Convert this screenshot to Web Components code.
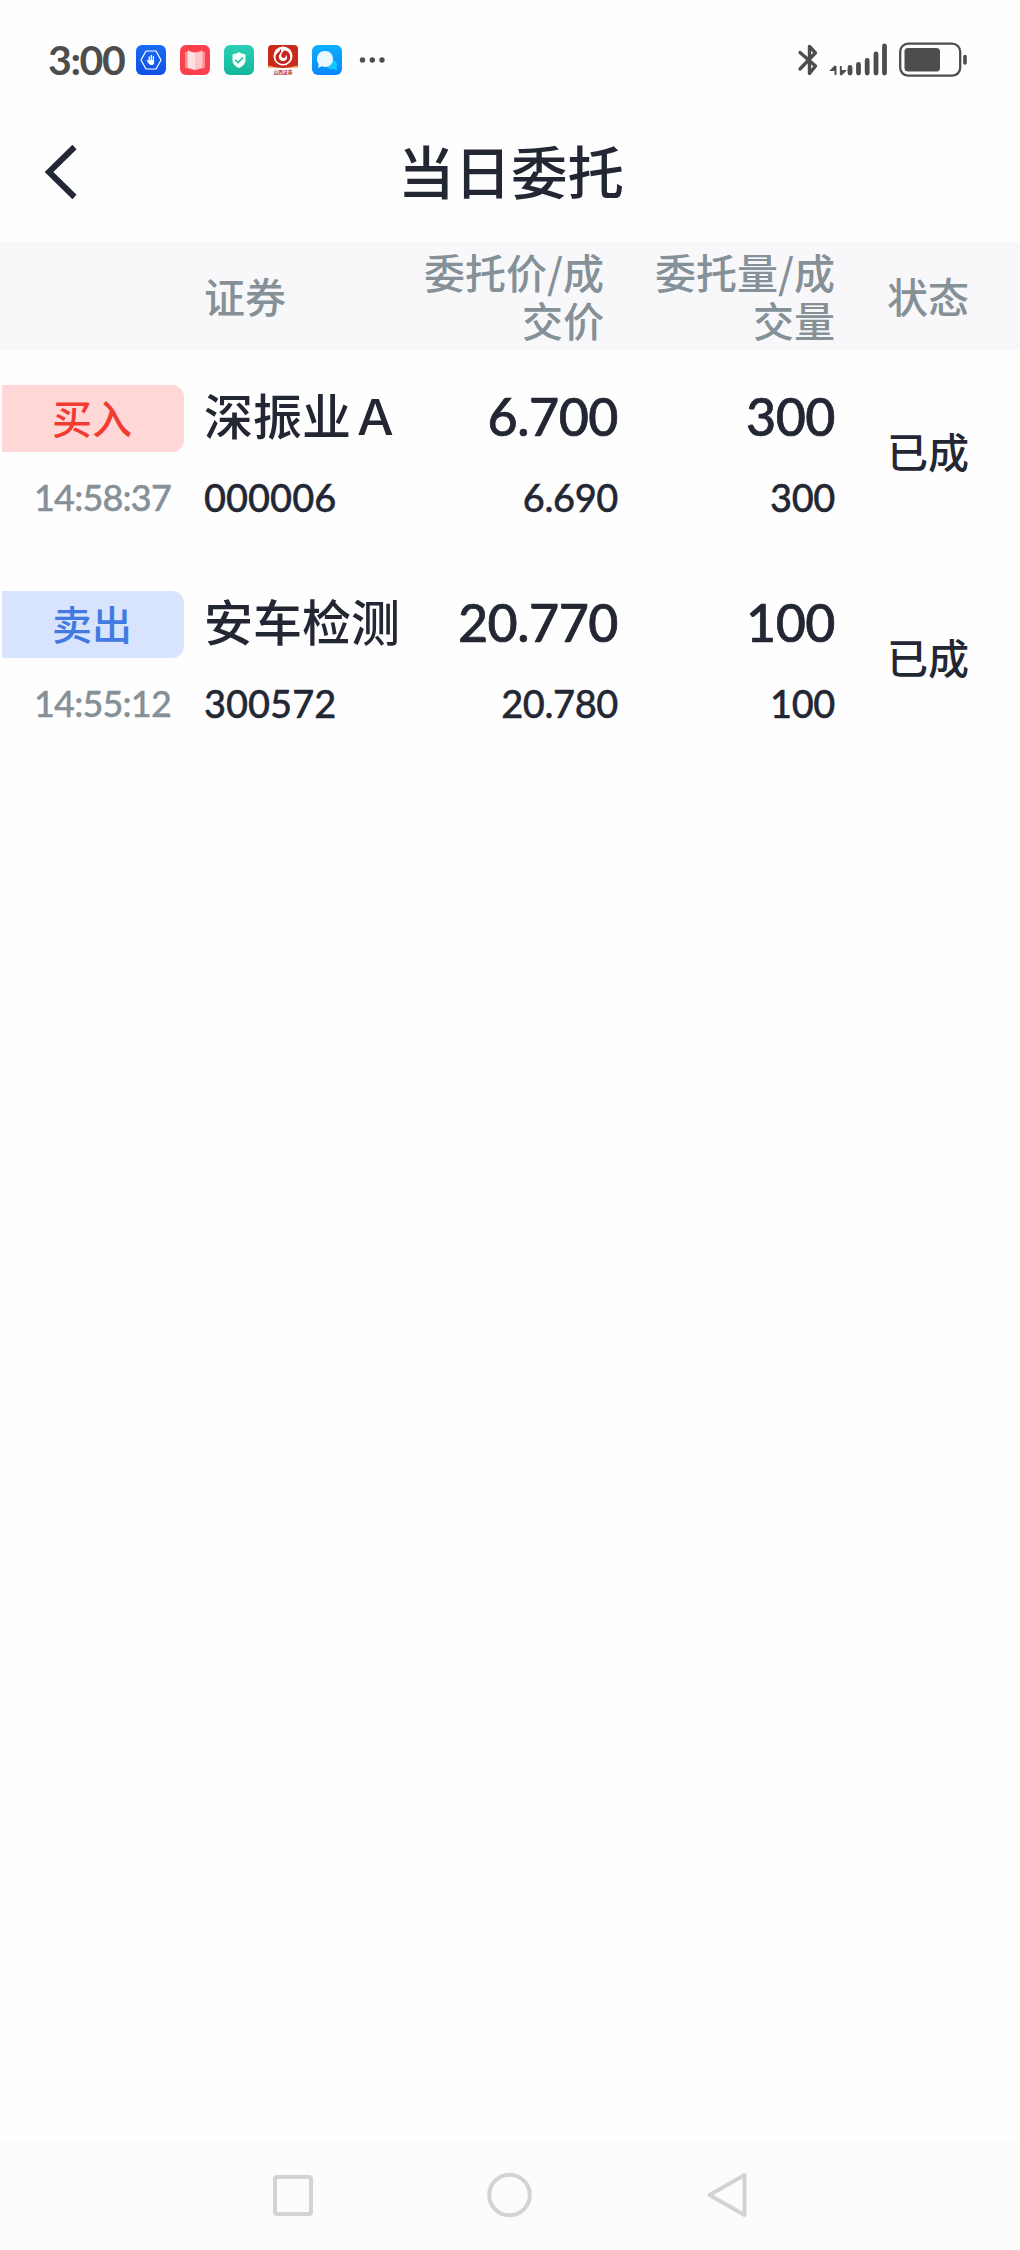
<!DOCTYPE html>
<html lang="zh-CN">
<head>
<meta charset="UTF-8">
<meta name="viewport" content="width=1020">
<title>当日委托</title>
<style>
  html, body {
    margin: 0;
    background: #fefefe;
  }
  body {
    font-family: Lato, "Noto Sans CJK SC", sans-serif;
    color: #232733;
    --muted: #869097;
    --system: #4d4d4d;
    --columns: 204px 214px 200px 217px 1fr;
  }
</style>
</head>
<body>
<orders-screen>
  <status-bar slot="status" time="3:00"></status-bar>
  <title-bar slot="title">当日委托</title-bar>
  <table-head slot="head">
    <span slot="name">证券</span>
    <span slot="price">委托价/成交价</span>
    <span slot="amount">委托量/成交量</span>
    <span slot="state">状态</span>
  </table-head>
  <order-row side="buy" time="14:58:37" name="深振业Ａ" code="000006" price="6.700" deal-price="6.690" amount="300" deal-amount="300">已成</order-row>
  <order-row side="sell" time="14:55:12" name="安车检测" code="300572" price="20.770" deal-price="20.780" amount="100" deal-amount="100">已成</order-row>
  <nav-bar slot="nav"></nav-bar>
</orders-screen>

<script>
class OrdersScreen extends HTMLElement {
  connectedCallback() {
    this.attachShadow({ mode: 'open' });
    this.shadowRoot.innerHTML = `
      <style>
        :host {
          display: flex;
          flex-direction: column;
          width: 1020px;
          height: 2250px;
          overflow: hidden;
        }
        main {
          flex: 1;
        }
      </style>
      <slot name="status"></slot>
      <slot name="title"></slot>
      <slot name="head"></slot>
      <main><slot></slot></main>
      <slot name="nav"></slot>
    `;
  }
}

class StatusBar extends HTMLElement {
  connectedCallback() {
    this.attachShadow({ mode: 'open' });
    this.shadowRoot.innerHTML = `
      <style>
        :host {
          display: flex;
          justify-content: space-between;
          align-items: center;
          box-sizing: border-box;
          height: 120px;
          padding: 0 53px 0 48px;
          color: var(--system);
        }
        .left, .apps, .right {
          display: flex;
          align-items: center;
        }
        .time {
          width: 88px;
          font-size: 41px;
          font-weight: 700;
          line-height: 48px;
          letter-spacing: -1.4px;
        }
        .apps {
          gap: 14px;
        }
        svg {
          display: block;
        }
        .more {
          margin-left: 3px;
        }
      </style>
      <div class="left">
        <span class="time">${this.getAttribute('time')}</span>
        <div class="apps">
          <!-- security -->
          <svg width="30" height="30" viewBox="0 0 30 30">
            <defs><linearGradient id="b" x2="0" y2="1"><stop stop-color="#1a6cf2"/><stop offset="1" stop-color="#1250e4"/></linearGradient></defs>
            <rect width="30" height="30" rx="6" fill="url(#b)"/>
            <path d="M10 6h10l5 9-5 9H10l-5-9z" fill="none" stroke="#fff" stroke-width="1.200" stroke-linejoin="round"/>
            <path d="M13.200 16v-4M15.300 15v-4.500M17.400 16v-4.500" stroke="#fff" stroke-width="1.300" stroke-linecap="round"/>
            <path d="M10.500 14.800c1 0 1.500 1.200 2 1.200V15h5.600v2.500c0 2-1 2.500-2.600 2.500-2.400 0-3.300-1.500-5-5.200z" fill="#fff"/>
          </svg>
          <!-- reader -->
          <svg width="30" height="30" viewBox="0 0 30 30">
            <rect width="30" height="30" rx="6" fill="#fb414e"/>
            <path d="M5 7h20v16l-10 2-10-2z" fill="#ff8e94"/>
            <path d="M7.500 5.500 15 8v17l-7.500-2.500z" fill="#ffe0e0"/>
            <path d="M22.500 5.500 15 8v17l7.500-2.500z" fill="#ffc6c8"/>
          </svg>
          <!-- shield -->
          <svg width="30" height="30" viewBox="0 0 30 30">
            <defs><linearGradient id="g" x2="0" y2="1"><stop stop-color="#2bd0b4"/><stop offset="1" stop-color="#15b79b"/></linearGradient></defs>
            <rect width="30" height="30" rx="6" fill="url(#g)"/>
            <path d="M15 7c2 1.500 4 2 6.500 2.300V15c0 4-3 6.500-6.500 8-3.500-1.500-6.500-4-6.500-8V9.300C11 9 13 8.500 15 7z" fill="#f4fffc"/>
            <path d="M11.300 14.800l2.800 2.800 4.800-5" fill="none" stroke="#1cbda1" stroke-width="1.500"/>
          </svg>
          <!-- broker -->
          <svg width="30" height="30" viewBox="0 0 30 30">
            <path d="M4 0h22q4 0 4 4v17q-15 4-30 0V4q0-4 4-4z" fill="#c92a1c"/>
            <path d="M0 20.500q7 1.500 9 2.300H0zM30 20.500q-7 1.500-9 2.300h9z" fill="#f3a55c"/>
            <circle cx="15" cy="11" r="9.500" fill="#fff"/>
            <path d="M12.500 3.500c.5 3-5 4.500-5 8.500 0 4 3.500 7 7.500 7s7.200-3 7.200-7c0-3.500-2-6.500-6-6.500-1 1.500-3 2.500-3 5 0 1.500 1 2.500 2.500 2.500 1.800 0 2.500-1.500 2-3.500 1.500 1.500 1.800 3 1 4.500s-2 2-3.700 2c-2.500 0-4.200-1.800-4.200-4.200 0-3 4-4.300 1.700-8.300z" fill="#c4261d"/>
            <text x="15" y="29.200" text-anchor="middle" font-size="4.800" font-weight="700" fill="#c4261d">山西证券</text>
          </svg>
          <!-- messages -->
          <svg width="30" height="30" viewBox="0 0 30 30">
            <defs><linearGradient id="m" x2="0" y2="1"><stop stop-color="#0cb0ff"/><stop offset="1" stop-color="#0a86fb"/></linearGradient></defs>
            <rect width="30" height="30" rx="6" fill="url(#m)"/>
            <path d="M22 15c3 1.500 4 4.500 2.500 7l.5 3-3-1c-3 .8-6 0-7.500-2.500z" fill="#12c7fb"/>
            <path d="M13 6c4.800 0 8 3.500 8 8s-3.500 8-8 8c-1.300 0-2.300-.2-3.300-.7L6 23l.7-4C5.500 17.500 5 16 5 14c0-4.500 3.300-8 8-8z" fill="#e9f8ff"/>
          </svg>
          <svg class="more" width="28" height="8" viewBox="0 0 28 8" fill="#4d4d4d">
            <circle cx="3.500" cy="4" r="2.700"/><circle cx="13.300" cy="4" r="2.700"/><circle cx="23" cy="4" r="2.700"/>
          </svg>
        </div>
      </div>
      <div class="right">
        <!-- bluetooth, signal and battery share one strip -->
        <svg width="170" height="36" viewBox="0 0 170 36" fill="none" stroke="#4d4d4d" stroke-linecap="round">
          <path d="M3 10l15.500 13.500-6 7.500V4l6 6.300L3 26.500" transform="translate(0 .5)" stroke-width="3.400" stroke-linejoin="round"/>
          <path d="M38.500 24v9M38.500 24L34.500 28h4M43.800 24v9M43.800 33l4-4h-4" stroke-width="1.900" stroke-linecap="butt"/>
          <path d="M53 25.500v5.500M61.500 22.500v8.500M70.200 18.500v12.500M79 12v19M87.500 4v27" stroke-width="4.800"/>
          <rect x="103.200" y="1.700" width="60" height="32" rx="8" stroke-width="2.300"/>
          <rect x="107.500" y="6" width="35.500" height="23.500" rx="3.500" fill="#4d4d4d" stroke="none"/>
          <path d="M168 14.500v6.500" stroke-width="3.600"/>
        </svg>
      </div>
    `;
  }
}

class TitleBar extends HTMLElement {
  connectedCallback() {
    this.attachShadow({ mode: 'open' });
    this.shadowRoot.innerHTML = `
      <style>
        :host {
          display: grid;
          grid-template-columns: 120px 1fr 120px;
          align-items: center;
          box-sizing: border-box;
          height: 122px;
          padding-bottom: 18px;
        }
        svg {
          display: block;
          margin-left: 44px;
        }
        h1 {
          margin: 0;
          padding-left: 2px;
          font-size: 56.500px;
          line-height: 80px;
          font-weight: 500;
          text-align: center;
        }
      </style>
      <svg width="36" height="56" viewBox="0 0 36 56">
        <path d="M30.500 3L5 28l25.500 25" fill="none" stroke="#232733" stroke-width="6"/>
      </svg>
      <h1><slot></slot></h1>
    `;
  }
}

class TableHead extends HTMLElement {
  connectedCallback() {
    this.attachShadow({ mode: 'open' });
    this.shadowRoot.innerHTML = `
      <style>
        :host {
          display: grid;
          grid-template-columns: var(--columns);
          align-items: center;
          box-sizing: border-box;
          height: 108px;
          padding-bottom: 2px;
          background: #f8f8fb;
          color: var(--muted);
          font-family: "Noto Sans CJK SC", sans-serif;
          font-size: 41px;
          font-weight: 500;
          line-height: 48px;
        }
        .name {
          grid-column: 2;
        }
        .num {
          box-sizing: border-box;
          text-align: right;
        }
        .price {
          width: 186px;
          justify-self: end;
          margin-right: 14px;
        }
        .amount {
          width: 186px;
          justify-self: end;
        }
        .state {
          padding-left: 52px;
        }
      </style>
      <div class="name"><slot name="name"></slot></div>
      <div class="num price"><slot name="price"></slot></div>
      <div class="num amount"><slot name="amount"></slot></div>
      <div class="state"><slot name="state"></slot></div>
    `;
  }
}

class SideTag extends HTMLElement {
  connectedCallback() {
    this.attachShadow({ mode: 'open' });
    this.shadowRoot.innerHTML = `
      <style>
        :host {
          display: block;
          box-sizing: border-box;
          width: 182px;
          height: 67px;
          margin-left: 2px;
          padding-right: 2px;
          border-radius: 0 12px 12px 0;
          background: #ffd7d7;
          color: #f03c33;
          font-size: 40px;
          font-weight: 500;
          line-height: 68px;
          text-align: center;
        }
        :host([side="sell"]) {
          background: #d8e4fd;
          color: #437ae2;
        }
      </style>
      <slot></slot>
    `;
  }
}

class OrderRow extends HTMLElement {
  connectedCallback() {
    const get = name => this.getAttribute(name);
    const side = get('side');
    this.attachShadow({ mode: 'open' });
    this.shadowRoot.innerHTML = `
      <style>
        :host {
          display: grid;
          grid-template-columns: var(--columns);
          box-sizing: border-box;
          height: 206px;
          padding-top: 35px;
        }
        .cell {
          display: flex;
          flex-direction: column;
          gap: 20px;
        }
        .top {
          height: 67px;
          line-height: 63px;
          white-space: nowrap;
        }
        .sub {
          height: 50px;
          line-height: 50px;
          font-size: 38px;
          font-weight: 500;
          -webkit-text-stroke: .4px;
        }
        .name {
          font-size: 49px;
          font-weight: 500;
        }
        .num {
          text-align: right;
        }
        .num .top {
          font-size: 52px;
          font-weight: 500;
          letter-spacing: -.5px;
          -webkit-text-stroke: .7px;
        }
        .num .sub {
          letter-spacing: -.4px;
        }
        .time {
          padding-left: 34px;
          color: var(--muted);
          font-size: 36px;
          letter-spacing: -.8px;
        }
        .state {
          padding: 34px 0 0 52px;
          font-size: 41px;
          font-weight: 500;
          line-height: 67px;
        }
      </style>
      <div class="cell">
        <side-tag side="${side}">${side === 'buy' ? '买入' : '卖出'}</side-tag>
        <div class="sub time">${get('time')}</div>
      </div>
      <div class="cell">
        <div class="top name">${get('name')}</div>
        <div class="sub">${get('code')}</div>
      </div>
      <div class="cell num">
        <div class="top">${get('price')}</div>
        <div class="sub">${get('deal-price')}</div>
      </div>
      <div class="cell num">
        <div class="top">${get('amount')}</div>
        <div class="sub">${get('deal-amount')}</div>
      </div>
      <div class="state"><slot></slot></div>
    `;
  }
}

class NavBar extends HTMLElement {
  connectedCallback() {
    this.attachShadow({ mode: 'open' });
    this.shadowRoot.innerHTML = `
      <style>
        :host {
          display: flex;
          justify-content: center;
          align-items: center;
          gap: 169px;
          height: 110px;
          background: #fcfcfc;
        }
        svg {
          display: block;
          fill: none;
          stroke: #d3d3d3;
          stroke-width: 4;
          stroke-linejoin: round;
        }
      </style>
      <svg width="48" height="48" viewBox="0 0 48 48"><rect x="6" y="6" width="36" height="37" rx="2"/></svg>
      <svg width="48" height="48" viewBox="0 0 48 48"><circle cx="23.500" cy="24" r="20.300"/></svg>
      <svg width="48" height="48" viewBox="0 0 48 48"><path d="M41.500 4v40L6.500 24z"/></svg>
    `;
  }
}

customElements.define('orders-screen', OrdersScreen);
customElements.define('status-bar', StatusBar);
customElements.define('title-bar', TitleBar);
customElements.define('table-head', TableHead);
customElements.define('side-tag', SideTag);
customElements.define('order-row', OrderRow);
customElements.define('nav-bar', NavBar);
</script>
</body>
</html>
